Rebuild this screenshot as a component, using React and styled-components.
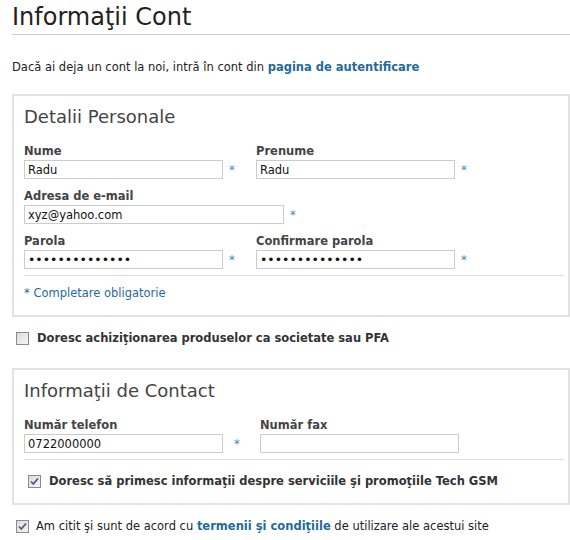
import React from "react";
import styled, { createGlobalStyle } from "styled-components";

const GlobalStyle = createGlobalStyle`
  body {
    margin: 0;
    background: #fff;
    font-family: "DejaVu Sans", Verdana, sans-serif;
    font-size: 11.5px;
    color: #222;
  }
`;

const Page = styled.div`
  width: 570px;
  padding: 4px 0 0 12px;
  box-sizing: border-box;
`;

const Title = styled.h1`
  margin: 0;
  padding-bottom: 4px;
  font-size: 24px;
  font-weight: normal;
  color: #222;
  border-bottom: 1px solid #ccc;
  line-height: 26px;
`;

const Intro = styled.p`
  margin: 25px 0 20px;
  line-height: 14px;
`;

const Link = styled.a`
  color: #1f6a9e;
  font-weight: bold;
  text-decoration: none;
`;

const Box = styled.fieldset`
  margin: 0;
  border: 2px solid #e2e2e2;
  padding: 10px 4px ${(p) => p.pb || 15}px 10px;
  min-width: 0;
`;

const BoxTitle = styled.h2`
  margin: 0 0 16px;
  font-size: 18px;
  font-weight: normal;
  color: #444;
  line-height: 22px;
`;

const Rows = styled.div`
  display: flex;
  flex-direction: column;
  gap: 10px;
`;

const Row = styled.div`
  display: flex;
`;

const Field = styled.div`
  display: flex;
  flex-direction: column;
`;

const Label = styled.label`
  font-weight: bold;
  color: #444;
  line-height: 14px;
  margin-bottom: 2px;
`;

const InputLine = styled.div`
  display: flex;
  align-items: center;
`;

const Input = styled.input`
  width: ${(p) => p.w || 199}px;
  height: 19px;
  box-sizing: border-box;
  border: 1px solid #ccc;
  padding: 1px 3px;
  font-family: inherit;
  font-size: ${(p) => (p.type === "password" ? 12.5 : 11.5)}px;
  color: #111;
  outline: none;
`;

const Star = styled.span`
  color: #3b8ac4;
  width: ${(p) => p.w || 33}px;
  padding-left: ${(p) => p.pl || 6}px;
  box-sizing: border-box;
`;

const Divider = styled.hr`
  border: none;
  border-top: 1px solid #ddd;
  margin: ${(p) => p.m || "6px 0 10px"};
`;

const Note = styled.div`
  color: #1f6a9e;
  line-height: 14px;
`;

const CheckRow = styled.label`
  display: flex;
  align-items: center;
  gap: ${(p) => (p.plain ? 7 : 8)}px;
  font-weight: ${(p) => (p.plain ? "normal" : "bold")};
  color: ${(p) => (p.plain ? "#222" : "#333")};
  margin: ${(p) => p.m || "0"};
  padding-left: 4px;
  line-height: 14px;
`;

const Box13 = styled.span`
  width: 13px;
  height: 13px;
  box-sizing: border-box;
  border: 1px solid #8b8b8b;
  background: linear-gradient(135deg, #dcdcd8 0%, #f5f5f2 100%);
  display: inline-flex;
  align-items: center;
  justify-content: center;
  flex: none;
`;

const Checkbox = ({ checked }) => (
  <Box13>
    {checked && (
      <svg width="9" height="9" viewBox="0 0 9 9">
        <path d="M1 4.5 L3.3 7 L8 1.5" fill="none" stroke="#4b5a8c" strokeWidth="1.8" />
      </svg>
    )}
  </Box13>
);

export default function App() {
  return (
    <>
      <GlobalStyle />
      <Page>
        <Title>Informaţii Cont</Title>
        <Intro>
          Dacă ai deja un cont la noi, intră în cont din <Link href="#">pagina de autentificare</Link>
        </Intro>

        <Box>
          <BoxTitle>Detalii Personale</BoxTitle>
          <Rows>
            <Row>
              <Field>
                <Label>Nume</Label>
                <InputLine>
                  <Input defaultValue="Radu" />
                  <Star>*</Star>
                </InputLine>
              </Field>
              <Field>
                <Label>Prenume</Label>
                <InputLine>
                  <Input defaultValue="Radu" />
                  <Star>*</Star>
                </InputLine>
              </Field>
            </Row>
            <Row>
              <Field>
                <Label>Adresa de e-mail</Label>
                <InputLine>
                  <Input w={260} defaultValue="xyz@yahoo.com" />
                  <Star>*</Star>
                </InputLine>
              </Field>
            </Row>
            <Row>
              <Field>
                <Label>Parola</Label>
                <InputLine>
                  <Input type="password" defaultValue="abcdefghijklmn" />
                  <Star>*</Star>
                </InputLine>
              </Field>
              <Field>
                <Label>Confirmare parola</Label>
                <InputLine>
                  <Input type="password" defaultValue="abcdefghijklmn" />
                  <Star>*</Star>
                </InputLine>
              </Field>
            </Row>
          </Rows>
          <Divider />
          <Note>* Completare obligatorie</Note>
        </Box>

        <CheckRow m="14px 0 23px">
          <Checkbox />
          Doresc achiziţionarea produselor ca societate sau PFA
        </CheckRow>

        <Box pb={15}>
          <BoxTitle>Informaţii de Contact</BoxTitle>
          <Row>
            <Field>
              <Label>Număr telefon</Label>
              <InputLine>
                <Input defaultValue="0722000000" />
                <Star w={37} pl={11}>*</Star>
              </InputLine>
            </Field>
            <Field>
              <Label>Număr fax</Label>
              <InputLine>
                <Input />
              </InputLine>
            </Field>
          </Row>
          <Divider m="6px 0 14px" />
          <CheckRow>
            <Checkbox checked />
            Doresc să primesc informaţii despre serviciile şi promoţiile Tech GSM
          </CheckRow>
        </Box>

        <CheckRow plain m="14px 0 0">
          <Checkbox checked />
          <span>
            Am citit şi sunt de acord cu <Link href="#">termenii şi condiţiile</Link> de utilizare ale acestui site
          </span>
        </CheckRow>
      </Page>
    </>
  );
}
